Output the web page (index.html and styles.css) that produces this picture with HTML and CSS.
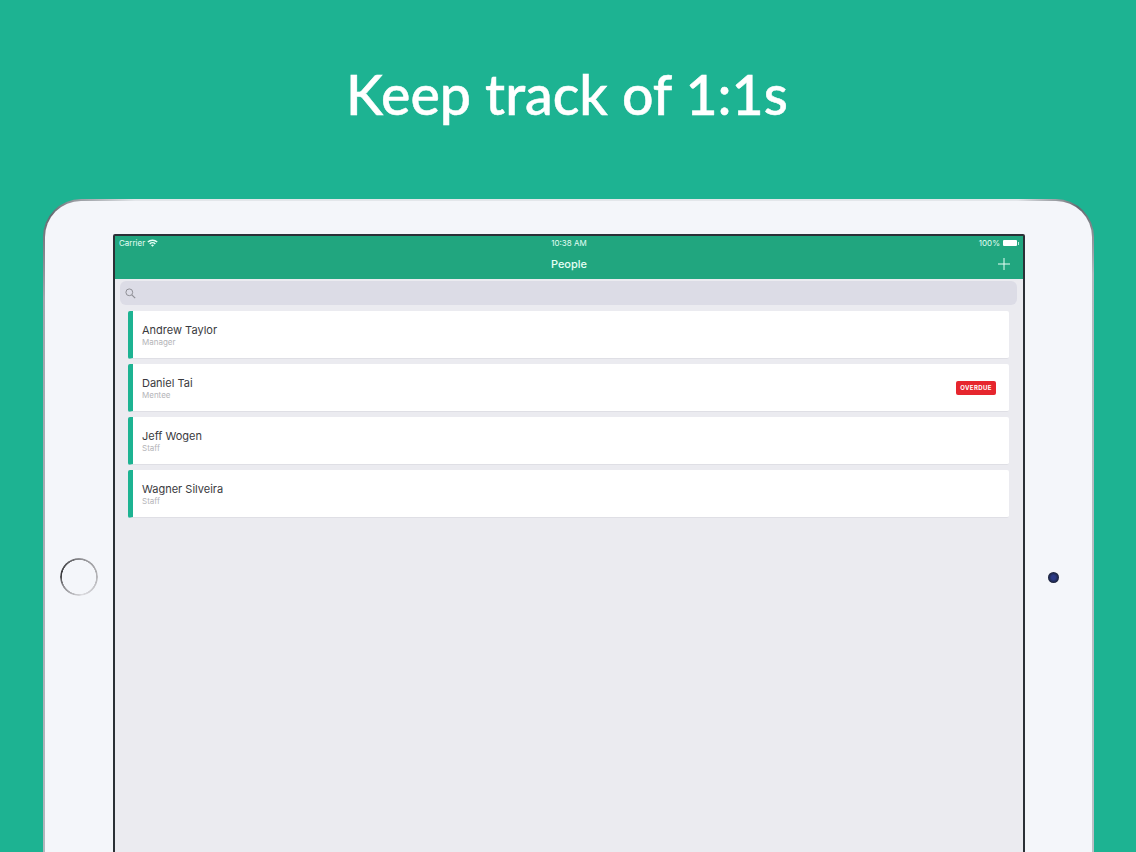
FILE: index.html
```html
<!DOCTYPE html>
<html lang="en">
<head>
    <meta charset="UTF-8">
    <title>Keep track of 1:1s</title>
    <link rel="stylesheet" href="styles.css">
</head>
<body>
    <h1 class="headline">Keep track of 1:1s</h1>

    <div class="device-clip">
        <div class="device">
            <div class="bezel">
                <div class="home-button"></div>
            </div>

            <div class="screen">
                <div class="top-bar">
                    <div class="status-bar">
                        <div class="status-left">
                            <span>Carrier</span>
                            <svg class="wifi" width="11" height="8" viewBox="0 0 11 8">
                                <path d="M0.3 2.6a7.4 7.4 0 0 1 10.4 0l-1 1a6 6 0 0 0-8.4 0z" fill="#e4fff5"/>
                                <path d="M2.2 4.4a4.7 4.7 0 0 1 6.6 0l-1 1a3.3 3.3 0 0 0-4.6 0z" fill="#e4fff5"/>
                                <path d="M4 6.2a2.1 2.1 0 0 1 3 0L5.5 7.8z" fill="#e4fff5"/>
                            </svg>
                        </div>
                        <div class="status-time">10:38 AM</div>
                        <div class="status-right">
                            <span>100%</span>
                            <div class="battery"></div>
                            <div class="battery-tip"></div>
                        </div>
                    </div>
                    <div class="nav-bar">
                        <div class="nav-title">People</div>
                        <svg class="add-icon" width="12" height="12" viewBox="0 0 12 12">
                            <path d="M6 0v12M0 6h12" stroke="#e9fff7" stroke-width="1"/>
                        </svg>
                    </div>
                </div>

                <div class="search-wrap">
                    <div class="search-field">
                        <svg width="11" height="11" viewBox="0 0 11 11">
                            <circle cx="4.3" cy="4.3" r="3.4" fill="none" stroke="#8f8f96" stroke-width="1"/>
                            <path d="M6.8 6.8l3.4 3.4" stroke="#8f8f96" stroke-width="1.2"/>
                        </svg>
                    </div>
                </div>

                <ul class="people">
                    <li class="person">
                        <div class="person-text">
                            <div class="person-name">Andrew Taylor</div>
                            <div class="person-role">Manager</div>
                        </div>
                    </li>
                    <li class="person">
                        <div class="person-text">
                            <div class="person-name">Daniel Tai</div>
                            <div class="person-role">Mentee</div>
                        </div>
                        <span class="badge">OVERDUE</span>
                    </li>
                    <li class="person">
                        <div class="person-text">
                            <div class="person-name">Jeff Wogen</div>
                            <div class="person-role">Staff</div>
                        </div>
                    </li>
                    <li class="person">
                        <div class="person-text">
                            <div class="person-name">Wagner Silveira</div>
                            <div class="person-role">Staff</div>
                        </div>
                    </li>
                </ul>
            </div>

            <div class="bezel bezel-right">
                <div class="camera"></div>
            </div>
        </div>
    </div>
</body>
</html>
```

FILE: styles.css
```css
html, body {
    height: 852px;
    overflow: hidden;
}
body {
    margin: 0;
    background-color: #1db392;
    font-family: 'Inter', 'Liberation Sans', sans-serif;
}

/* headline above the tablet */
.headline {
    margin: 0;
    height: 199px;
    padding: 56px 2px 0 0;
    box-sizing: border-box;
    text-align: center;
    color: #fff;
    font-family: 'Lato', sans-serif;
    font-size: 55.5px;
    font-weight: 500;
    -webkit-text-stroke: 0.5px #fff;
    line-height: 76px;
}

/* tablet frame, cut off by the bottom of the page */
.device-clip {
    height: 653px;
    overflow: hidden;
}
.device {
    display: flex;
    box-sizing: border-box;
    width: 1051px;
    height: 756px;
    margin-left: 43px;
    border: 2px solid transparent;
    border-radius: 38px;
    background:
        linear-gradient(#f4f6fa, #f4f6fa) padding-box,
        conic-gradient(#e3e6ea 0deg, #e3e6ea 50deg, #666a70 54deg, #b4b8be 60deg, #c4c8cd 180deg, #a2a6ad 298deg, #666a70 305deg, #e3e6ea 311deg, #e3e6ea 360deg) border-box;
}
.bezel {
    flex: none;
    display: flex;
    box-sizing: border-box;
    width: 68px;
    align-items: center;
    justify-content: center;
}
.bezel-right {
    width: 67px;
    padding-right: 11px;
}
.home-button {
    width: 38px;
    height: 38px;
    border-radius: 50%;
    background: conic-gradient(#8e8e92, #b5b5b8 90deg, #dcdce0 170deg, #8a8a8e 240deg, #38383b 280deg, #6d6d70 340deg, #8e8e92);
    -webkit-mask: radial-gradient(circle, transparent 16.8px, #000 17.4px);
    mask: radial-gradient(circle, transparent 16.8px, #000 17.4px);
}
.camera {
    width: 11px;
    height: 11px;
    border-radius: 50%;
    background: radial-gradient(circle, #2b3a86 25%, #1b2238 70%);
}

/* screen */
.screen {
    width: 908px;
    height: 684px;
    margin-top: 33px;
    border: 2px solid #2b3036;
    border-radius: 2px;
    background-color: #ebebf0;
}
.top-bar {
    height: 43px;
    background-color: #21a67f;
    color: #e4fff5;
}
.status-bar {
    display: grid;
    grid-template-columns: 1fr auto 1fr;
    align-items: center;
    height: 14px;
    padding: 0 4px;
    font-size: 8px;
}
.status-left, .status-right {
    display: flex;
    align-items: center;
}
.status-left {
    gap: 2px;
}
.status-right {
    justify-content: flex-end;
    gap: 3px;
}
.battery {
    width: 14px;
    height: 6px;
    border-radius: 1px;
    background-color: #fff;
}
.battery-tip {
    width: 1px;
    height: 3px;
    margin-left: -2px;
    background-color: #bfeedd;
}
.nav-bar {
    display: flex;
    align-items: center;
    justify-content: center;
    position: relative;
    height: 29px;
}
.nav-title {
    margin-bottom: 2px;
    font-size: 11px;
    font-weight: 500;
}
.add-icon {
    position: absolute;
    right: 13px;
    top: 8px;
}

/* search */
.search-wrap {
    padding: 2px 6px 6px 5px;
}
.search-field {
    display: flex;
    align-items: center;
    height: 24px;
    padding-left: 5px;
    border-radius: 6px;
    background-color: #dcdce6;
}

/* list of people */
.people {
    display: flex;
    flex-direction: column;
    gap: 5.1px;
    margin: 0;
    padding: 0 14px 0 13px;
    list-style: none;
}
.person {
    display: flex;
    align-items: center;
    justify-content: space-between;
    box-sizing: border-box;
    height: 48px;
    padding: 0 13px 0 9px;
    border-left: 5px solid #1db392;
    border-bottom: 1px solid #dfdfe5;
    border-radius: 2px;
    background-color: #fff;
}
.person-text {
    padding-top: 2px;
}
.person-name {
    color: #3a3a3e;
    font-size: 11px;
    line-height: 13px;
}
.person-role {
    color: #b4b4b8;
    font-size: 8px;
    line-height: 11px;
}
.badge {
    width: 40px;
    height: 14px;
    border-radius: 2px;
    background-color: #e6262e;
    color: #fff;
    font-size: 6px;
    font-weight: 700;
    letter-spacing: 0.4px;
    line-height: 14px;
    text-align: center;
}
```
